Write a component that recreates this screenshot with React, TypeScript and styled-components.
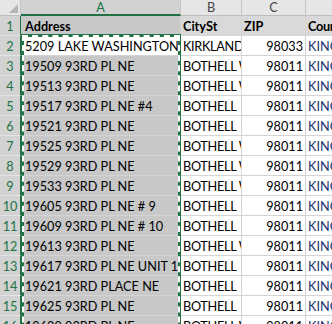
import React from 'react';
import styled, { createGlobalStyle } from 'styled-components';

const GREEN = '#217346';
const COLS = '21px 160px 61px 64px 96px';
const GRID = '#d4d4d4';

const Global = createGlobalStyle`
  html, body { margin: 0; padding: 0; background: #ffffff; overflow: hidden; }
  body { font-family: Lato, "Liberation Sans", sans-serif; font-size: 12.7px; color: #000; }
`;

const Sheet = styled.div`
  position: relative;
  width: 332px;
  height: 324px;
  overflow: hidden;
  display: flex;
  flex-direction: column;
`;

const Row = styled.div<{ $header?: boolean }>`
  display: grid;
  grid-template-columns: ${COLS};
  height: ${(p) => (p.$header ? 16 : 20)}px;
  flex: none;
`;

const Corner = styled.div`
  box-sizing: border-box;
  background: #e6e6e6;
  border-right: 1px solid #c4c4c4;
  border-bottom: 1px solid #bdbdbd;
  display: flex;
  align-items: flex-end;
  justify-content: flex-end;
  padding: 0 2px 2px 0;
`;

const ColHead = styled.div<{ $selected?: boolean }>`
  box-sizing: border-box;
  background: ${(p) => (p.$selected ? '#d2d2d2' : '#e6e6e6')};
  color: ${(p) => (p.$selected ? GREEN : '#444444')};
  border-right: 1px solid #c4c4c4;
  border-bottom: ${(p) => (p.$selected ? `2px solid ${GREEN}` : '1px solid #bdbdbd')};
  text-align: center;
  line-height: 15px;
  overflow: hidden;
`;

const RowHead = styled.div`
  box-sizing: border-box;
  background: #d2d2d2;
  color: ${GREEN};
  border-right: 1px solid ${GREEN};
  border-bottom: 1px solid #e2e2e2;
  text-align: center;
  padding-top: 2px;
  line-height: 17px;
`;

type Tone = 'plain' | 'title' | 'sel' | 'active';

const bg: Record<Tone, string> = {
  plain: '#ffffff',
  title: '#d9d9d9',
  sel: '#c8c8c8',
  active: '#ffffff',
};

const Cell = styled.div<{
  $tone: Tone;
  $right?: boolean;
  $bold?: boolean;
  $blue?: boolean;
  $tight?: boolean;
}>`
  box-sizing: border-box;
  background: ${(p) => bg[p.$tone]};
  border-right: 1px solid ${GRID};
  border-bottom: 1px solid ${GRID};
  padding: 2px 2px 0 ${(p) => (p.$tone === 'sel' || p.$tone === 'active' ? 4 : 2)}px;
  line-height: 17px;
  white-space: pre;
  overflow: hidden;
  text-align: ${(p) => (p.$right ? 'right' : 'left')};
  font-weight: ${(p) => (p.$bold ? 700 : 400)};
  letter-spacing: ${(p) => (p.$tight ? '-0.3px' : 'normal')};
  color: ${(p) => (p.$blue ? '#1a2f6e' : '#000000')};
`;

const Marquee = styled.div`
  position: absolute;
  top: 34px;
  left: 21px;
  width: 160px;
  height: 400px;
  box-sizing: border-box;
  border: 3px solid ${GREEN};
  pointer-events: none;
  &::before {
    content: '';
    position: absolute;
    inset: -2px;
    border: 2px dashed #ffffff;
  }
`;

const rows: [string, string, string, string][] = [
  ['5209 LAKE WASHINGTON BLVD NE', 'KIRKLAND WA', '98033', 'KING'],
  ['19509 93RD PL NE', 'BOTHELL WA', '98011', 'KING'],
  ['19513 93RD PL NE', 'BOTHELL WA', '98011', 'KING'],
  ['19517 93RD PL NE #4', 'BOTHELL  WA', '98011', 'KING'],
  ['19521 93RD PL NE', 'BOTHELL  WA', '98011', 'KING'],
  ['19525 93RD PL NE', 'BOTHELL WA', '98011', 'KING'],
  ['19529 93RD PL NE', 'BOTHELL WA', '98011', 'KING'],
  ['19533 93RD PL NE', 'BOTHELL WA', '98011', 'KING'],
  ['19605 93RD PL NE # 9', 'BOTHELL  WA', '98011', 'KING'],
  ['19609 93RD PL NE # 10', 'BOTHELL  WA', '98011', 'KING'],
  ['19613 93RD PL NE', 'BOTHELL WA', '98011', 'KING'],
  ['19617 93RD PL NE UNIT 12', 'BOTHELL  WA', '98011', 'KING'],
  ['19621 93RD PLACE NE', 'BOTHELL  WA', '98011', 'KING'],
  ['19625 93RD PL NE', 'BOTHELL   WA', '98011', 'KING'],
  ['19629 93RD PL NE', 'BOTHELL WA', '98011', 'KING'],
  ['19633 93RD PL NE', 'BOTHELL WA', '98011', 'KING'],
];

export default function App() {
  return (
    <>
      <Global />
      <Sheet>
        <Row $header>
          <Corner>
            <svg width="9" height="9" viewBox="0 0 9 9">
              <polygon points="9,0 9,9 0,9" fill="#b4b4b4" />
            </svg>
          </Corner>
          <ColHead $selected>A</ColHead>
          <ColHead>B</ColHead>
          <ColHead>C</ColHead>
          <ColHead>D</ColHead>
        </Row>
        <Row>
          <RowHead>1</RowHead>
          <Cell $tone="sel" $bold>Address</Cell>
          <Cell $tone="title" $bold>CitySt</Cell>
          <Cell $tone="title" $bold>ZIP</Cell>
          <Cell $tone="title" $bold $tight>County</Cell>
        </Row>
        {rows.map((r, i) => (
          <Row key={i}>
            <RowHead>{i + 2}</RowHead>
            <Cell $tone={i === 0 ? 'active' : 'sel'}>{r[0]}</Cell>
            <Cell $tone="plain" $tight>{r[1]}</Cell>
            <Cell $tone="plain" $right>{r[2]}</Cell>
            <Cell $tone="plain" $blue>{r[3]}</Cell>
          </Row>
        ))}
        <Marquee />
      </Sheet>
    </>
  );
}
